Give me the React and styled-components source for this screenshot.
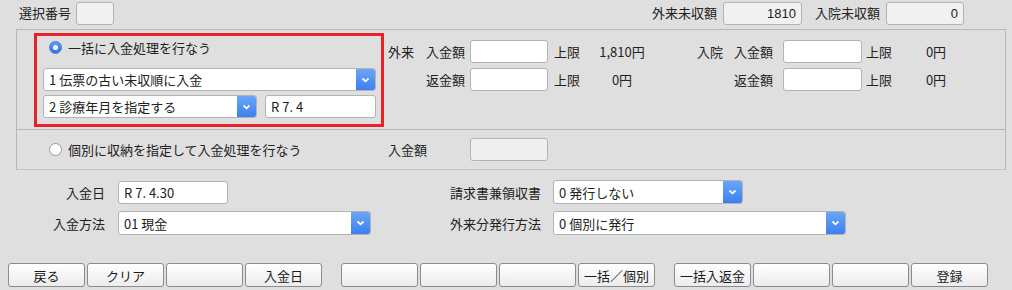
import styled, { createGlobalStyle } from "styled-components";

const GlobalStyle = createGlobalStyle`
  body {
    margin: 0;
    background: #dfdfdf;
    font-family: "Noto Sans CJK JP", "Noto Sans", sans-serif;
    font-size: 13px;
    color: #222;
  }
`;

const Page = styled.div`
  width: 1012px;
  height: 290px;
  display: flex;
  flex-direction: column;
  background: #dfdfdf;
  overflow: hidden;
`;

const TopBar = styled.div`
  display: flex;
  align-items: center;
  height: 29px;
  padding: 0 48px 3px 19px;
  box-sizing: border-box;
`;

const Label = styled.span`
  white-space: nowrap;
  line-height: 16px;
  width: ${(p) => (p.$w ? `${p.$w}px` : "auto")};
  text-align: ${(p) => p.$align || "left"};
  margin-right: ${(p) => p.$mr || 0}px;
  flex-shrink: 0;
`;

const ReadBox = styled.div`
  width: ${(p) => p.$w}px;
  height: 23px;
  box-sizing: border-box;
  border: 1px solid #b3b3b3;
  border-radius: 3px;
  background: #f1f1f1;
  text-align: right;
  padding-right: 5px;
  line-height: 21px;
  font-family: "Liberation Sans", sans-serif;
  font-size: 13px;
  color: #222;
  margin-right: ${(p) => p.$mr || 0}px;
`;

const RightGroup = styled.div`
  margin-left: auto;
  display: flex;
  align-items: center;
`;

const Panel = styled.div`
  margin-left: 16px;
  width: 990px;
  box-sizing: border-box;
  border: 1px solid #b8b8b8;
  border-bottom-color: #c4c4c4;
`;

const Section = styled.div`
  display: flex;
  align-items: ${(p) => (p.$center ? "center" : "flex-start")};
  height: ${(p) => p.$h}px;
  box-sizing: border-box;
  border-bottom: ${(p) => (p.$divider ? "1px solid #b8b8b8" : "none")};
`;

const RedBox = styled.div`
  margin: 3px 0 0 17px;
  width: 350px;
  height: 94px;
  box-sizing: border-box;
  border: 3px solid #e8212b;
  padding: 0 5px 0 6px;
  display: flex;
  flex-direction: column;
`;

const RadioRow = styled.label`
  display: flex;
  align-items: center;
  gap: 6px;
  height: 22px;
  padding-left: ${(p) => p.$pl || 6}px;
  width: ${(p) => (p.$w ? `${p.$w}px` : "auto")};
  box-sizing: border-box;
  flex-shrink: 0;
  white-space: nowrap;
`;

const RadioDot = styled.span`
  width: 13px;
  height: 13px;
  border-radius: 50%;
  box-sizing: border-box;
  flex-shrink: 0;
  position: relative;
  background: ${(p) =>
    p.$checked ? "linear-gradient(#5f9df8, #2f74ee)" : "#fff"};
  border: 1px solid ${(p) => (p.$checked ? "#3a7ae8" : "#9a9a9a")};
  &::after {
    content: "";
    display: ${(p) => (p.$checked ? "block" : "none")};
    position: absolute;
    left: 3px;
    top: 3px;
    width: 5px;
    height: 5px;
    border-radius: 50%;
    background: #fff;
  }
`;

const Row = styled.div`
  display: flex;
  gap: ${(p) => p.$gap || 0}px;
  margin-top: ${(p) => p.$mt || 0}px;
`;

const SelectBox = styled.div`
  width: ${(p) => p.$w}px;
  height: ${(p) => p.$h || 23}px;
  box-sizing: border-box;
  display: flex;
  border: 1px solid #b3b3b3;
  border-radius: 3px;
  background: #fff;
  overflow: hidden;
  color: #222;
`;

const SelectText = styled.span`
  flex: 1;
  padding-left: 5px;
  display: flex;
  align-items: center;
  white-space: nowrap;
`;

const SelectButton = styled.span`
  width: 19px;
  display: flex;
  align-items: center;
  justify-content: center;
  background: linear-gradient(#6aa6f8, #3c7ff0);
`;

const TextInput = styled.div`
  width: ${(p) => p.$w}px;
  height: ${(p) => p.$h || 23}px;
  box-sizing: border-box;
  border: 1px solid #b3b3b3;
  border-radius: 3px;
  background: ${(p) => (p.$disabled ? "#efefef" : "#fff")};
  padding-left: 5px;
  display: flex;
  align-items: center;
  color: #222;
  white-space: nowrap;
`;

const FeeArea = styled.div`
  display: flex;
  margin-top: 10px;
`;

const FeeGroup = styled.div`
  display: grid;
  grid-template-columns: ${(p) => p.$cols};
  grid-auto-rows: 23px;
  row-gap: 5px;
  align-items: center;
  margin-left: ${(p) => p.$ml || 0}px;
`;

const Amount = styled.span`
  text-align: center;
  white-space: nowrap;
`;

const FormGrid = styled.div`
  display: grid;
  grid-template-columns: 103px 332px 103px 1fr;
  grid-auto-rows: 24px;
  row-gap: 7px;
  align-items: center;
  margin-top: 10px;
  padding-left: 15px;
`;

const FormLabel = styled.span`
  white-space: nowrap;
  text-align: ${(p) => (p.$right ? "right" : "left")};
  padding-right: ${(p) => (p.$right ? 13 : 0)}px;
`;

const ButtonBar = styled.div`
  display: flex;
  gap: 19px;
  padding-left: 8px;
  margin-top: 28px;
`;

const ButtonGroup = styled.div`
  display: flex;
  gap: 2px;
`;

const FnButton = styled.button`
  width: 77px;
  height: 24px;
  box-sizing: border-box;
  border: 1px solid #8c8c8c;
  border-radius: 3px;
  background: linear-gradient(#ffffff, #ececec);
  font-family: "Noto Sans CJK JP", sans-serif;
  font-size: 13px;
  color: #1a1a1a;
  padding: 0;
  cursor: pointer;
`;

function Chevron() {
  return (
    <svg width="9" height="6" viewBox="0 0 9 6">
      <path d="M1.5 1.5 L4.5 4.3 L7.5 1.5" fill="none" stroke="#fff" strokeWidth="1.8" />
    </svg>
  );
}

function Select({ w, h, children }) {
  return (
    <SelectBox $w={w} $h={h}>
      <SelectText>{children}</SelectText>
      <SelectButton>
        <Chevron />
      </SelectButton>
    </SelectBox>
  );
}

const buttonGroups = [
  ["戻る", "クリア", "", "入金日"],
  ["", "", "", "一括／個別"],
  ["一括入返金", "", "", "登録"],
];

export default function App() {
  return (
    <Page>
      <GlobalStyle />
      <TopBar>
        <Label $mr={5}>選択番号</Label>
        <ReadBox $w={38} />
        <RightGroup>
          <Label $mr={6}>外来未収額</Label>
          <ReadBox $w={79} $mr={13}>1810</ReadBox>
          <Label $mr={6}>入院未収額</Label>
          <ReadBox $w={78}>0</ReadBox>
        </RightGroup>
      </TopBar>

      <Panel>
        <Section $h={100} $divider>
          <RedBox>
            <RadioRow>
              <RadioDot $checked />
              一括に入金処理を行なう
            </RadioRow>
            <Row $mt={10}>
              <Select w={333}>1 伝票の古い未収順に入金</Select>
            </Row>
            <Row $mt={4} $gap={8}>
              <Select w={214}>2 診療年月を指定する</Select>
              <TextInput $w={111}>R 7. 4</TextInput>
            </Row>
          </RedBox>

          <FeeArea>
            <FeeGroup $ml={4} $cols="38px 44px 78px 6px 30px 76px">
              <span>外来</span>
              <span>入金額</span>
              <TextInput $w={78} />
              <span />
              <span>上限</span>
              <Amount>1,810円</Amount>
              <span />
              <span>返金額</span>
              <TextInput $w={78} />
              <span />
              <span>上限</span>
              <Amount>0円</Amount>
            </FeeGroup>
            <FeeGroup $ml={37} $cols="37px 49px 79px 4px 30px 80px">
              <span>入院</span>
              <span>入金額</span>
              <TextInput $w={79} />
              <span />
              <span>上限</span>
              <Amount>0円</Amount>
              <span />
              <span>返金額</span>
              <TextInput $w={79} />
              <span />
              <span>上限</span>
              <Amount>0円</Amount>
            </FeeGroup>
          </FeeArea>
        </Section>

        <Section $h={39} $center>
          <RadioRow $pl={32} $w={371}>
            <RadioDot />
            個別に収納を指定して入金処理を行なう
          </RadioRow>
          <Label $w={82}>入金額</Label>
          <TextInput $w={78} $disabled />
        </Section>
      </Panel>

      <FormGrid>
        <FormLabel $right>入金日</FormLabel>
        <TextInput $w={110}>R 7. 4.30</TextInput>
        <FormLabel>請求書兼領収書</FormLabel>
        <Select w={190} h={24}>0 発行しない</Select>
        <FormLabel $right>入金方法</FormLabel>
        <Select w={253} h={24}>01 現金</Select>
        <FormLabel>外来分発行方法</FormLabel>
        <Select w={293} h={24}>0 個別に発行</Select>
      </FormGrid>

      <ButtonBar>
        {buttonGroups.map((group, gi) => (
          <ButtonGroup key={gi}>
            {group.map((label, i) => (
              <FnButton key={i}>{label}</FnButton>
            ))}
          </ButtonGroup>
        ))}
      </ButtonBar>
    </Page>
  );
}
